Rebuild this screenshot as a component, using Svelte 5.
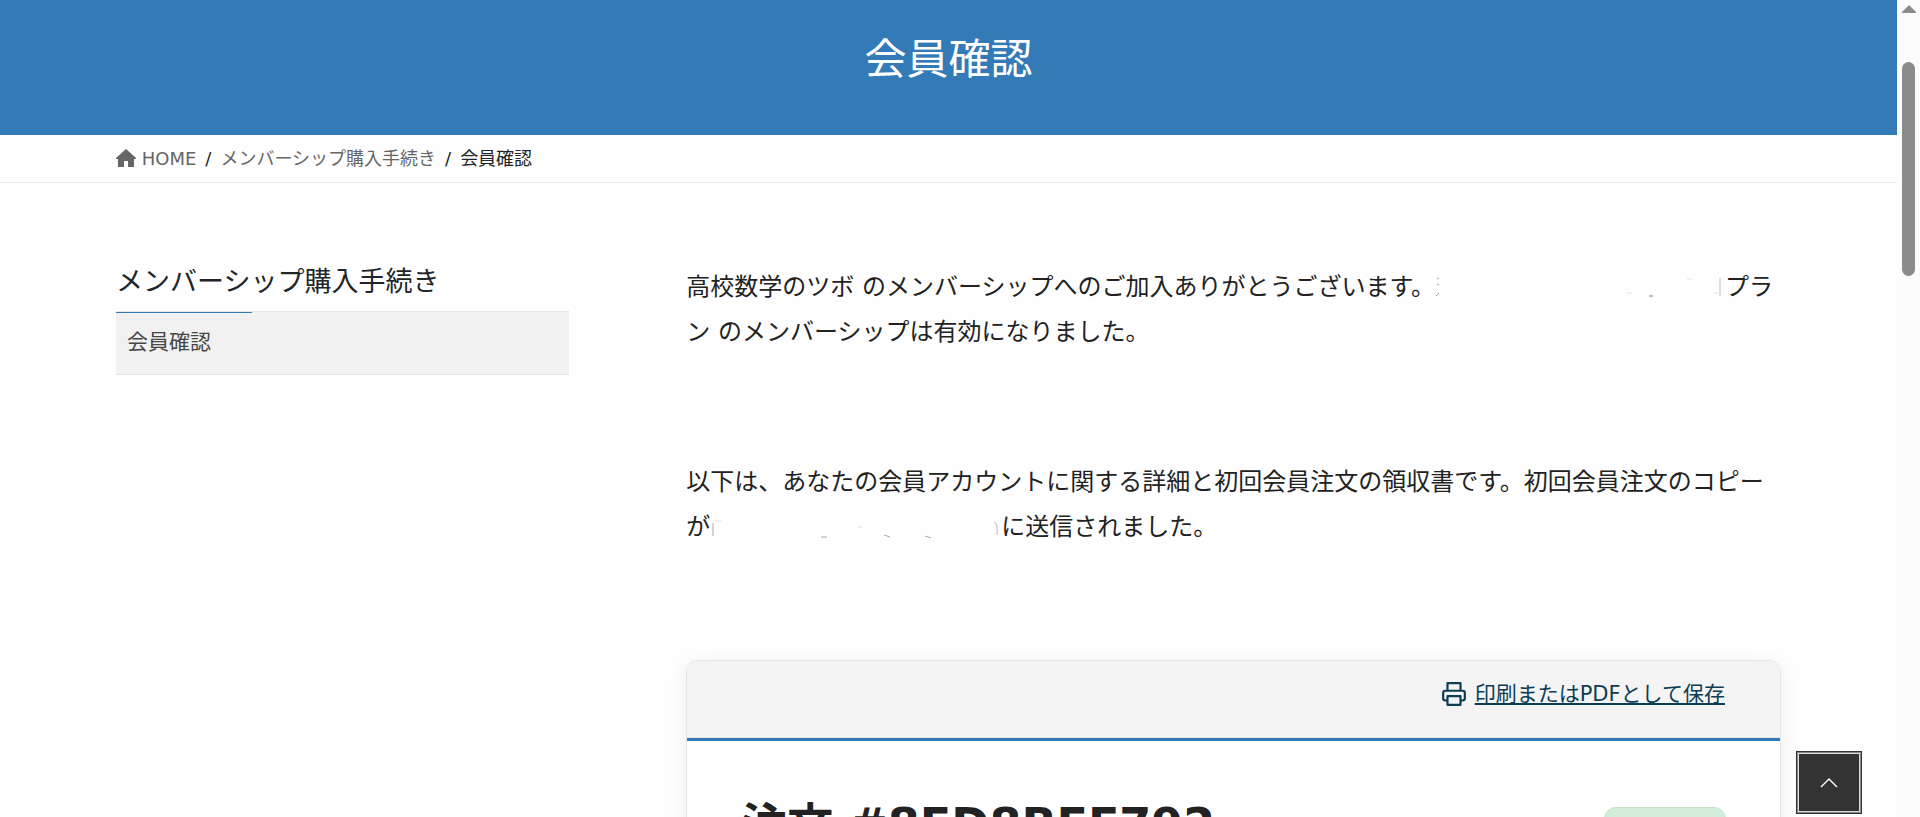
<script>
  const crumbs = ['メンバーシップ購入手続き'];
</script>

<div class="window">
  <div class="page">
    <header class="banner"><h1>会員確認</h1></header>

    <nav class="crumbs" aria-label="breadcrumb">
      <ol class="container">
        <li>
          <a href="#home">
            <svg class="home" viewBox="0 0 20 18" aria-hidden="true"><path d="M10 0 20 9v1h-2v8h-6v-6H8v6H2v-8H0V9z" /></svg>
            HOME
          </a>
        </li>
        {#each crumbs as crumb}
          <li><a href="#parent">{crumb}</a></li>
        {/each}
        <li aria-current="page">会員確認</li>
      </ol>
    </nav>

    <div class="container columns">
      <aside>
        <h2>メンバーシップ購入手続き</h2>
        <a class="side-link" href="#confirm">会員確認</a>
      </aside>

      <main>
        <p>
          高校数学のツボ のメンバーシップへのご加入ありがとうございます。<svg class="gap plan" viewBox="0 0 290 24" aria-hidden="true">
            <path d="M2 3l2 1M2 9l2 1M1 21l3-3" stroke="#999" />
            <path d="M192 18h5M252 4h5M278 18h5" stroke="#e4e2de" />
            <path d="M214 21h4" stroke="#bbb" stroke-width="2" />
            <path d="M285 3v18" stroke="#ddd" stroke-width="2" />
          </svg>プラン のメンバーシップは有効になりました。
        </p>
        <p class="second">
          以下は、あなたの会員アカウントに関する詳細と初回会員注文の領収書です。初回会員注文のコピーが<svg class="gap mail" viewBox="0 0 291 24" aria-hidden="true">
            <path d="M3 8v13" stroke="#aaa" />
            <path d="M5 6h6M148 12h4" stroke="#ddd" />
            <path d="M111 22h6M174 20l6 2M215 21l6 2" stroke="#aaa" />
            <path d="M284 7q4 1 3 13" stroke="#bbb" />
          </svg>に送信されました。
        </p>

        <section class="card">
          <div class="card-bar">
            <a href="#print">
              <svg class="printer" viewBox="0 0 24 24" aria-hidden="true">
                <path d="M6 9V2h12v7M6 18H4a2 2 0 0 1-2-2v-5a2 2 0 0 1 2-2h16a2 2 0 0 1 2 2v5a2 2 0 0 1-2 2h-2M6 14h12v8H6z" />
              </svg>
              <span>印刷またはPDFとして保存</span>
            </a>
          </div>
          <div class="card-body">
            <h2>注文 #8FD8BFF792</h2>
            <span class="badge"></span>
          </div>
        </section>
      </main>
    </div>
  </div>

  <div class="scrollbar" aria-hidden="true">
    <svg viewBox="0 0 16 9"><path d="M8 0 15 7v1H1V7z" /></svg>
    <div class="thumb"></div>
  </div>

  <button class="to-top" aria-label="ページの先頭へ">
    <svg viewBox="0 0 20 12" aria-hidden="true"><path d="M2 10 10 2l8 8" /></svg>
  </button>
</div>

<style>
  :global(body) {
    margin: 0;
    overflow: hidden;
    background: #fefefe;
  }
  .window {
    display: flex;
    height: 100vh;
    overflow: hidden;
    color: #212529;
    font-family: "DejaVu Sans", "Noto Sans CJK JP", sans-serif;
  }
  .page {
    flex: 1;
    min-width: 0;
  }
  h1, h2, p, ol {
    margin: 0;
    padding: 0;
    font-weight: 400;
  }
  .container {
    width: 88%;
    max-width: 1665px;
    margin: 0 auto;
  }
  .banner {
    padding: 28px 0 43px;
    background: #337ab7;
    color: #fff;
    text-align: center;
  }
  h1 {
    font-size: 42px;
    line-height: 64px;
  }
  .crumbs {
    padding: 8px 0;
    border-bottom: 1px solid #eee;
    font-size: 18px;
    line-height: 31px;
  }
  ol {
    display: flex;
    list-style: none;
  }
  li + li::before {
    content: "/";
    padding: 0 9px;
  }
  .crumbs a {
    color: #666;
    text-decoration: none;
  }
  .home {
    width: 20px;
    height: 18px;
    vertical-align: -2px;
    fill: #666;
  }
  .columns {
    display: flex;
    justify-content: space-between;
    align-items: flex-start;
    padding-top: 80px;
  }
  aside {
    width: 27.2%;
  }
  aside h2 {
    padding-bottom: 10px;
    font-size: 27px;
    line-height: 38px;
  }
  .side-link {
    display: block;
    padding: 13px 11px 15px;
    border: solid #e5e5e5;
    border-width: 1px 0;
    background: linear-gradient(#337ab7, #337ab7) 0 0 / 30% 1px no-repeat #f1f1f1;
    color: #464646;
    font-size: 21px;
    line-height: 34px;
    text-decoration: none;
  }
  main {
    width: 65.75%;
    color: #222;
  }
  p {
    padding-top: 2px;
    font-size: 24px;
    line-height: 45px;
    word-break: break-all;
  }
  .second {
    margin-top: 103px;
  }
  .gap {
    height: 24px;
    vertical-align: -4px;
    fill: none;
  }
  .plan {
    width: 290px;
  }
  .mail {
    width: 291px;
  }
  .card {
    margin-top: 110px;
    border: 1px solid #e5e5e5;
    border-radius: 12px;
    overflow: hidden;
    background: #fff;
    box-shadow: 0 4px 20px #00000012;
  }
  .card-bar {
    display: flex;
    justify-content: flex-end;
    padding: 14px 55px 24px;
    border-bottom: 1px solid #e5e5e5;
    background: #f4f4f4;
  }
  .card-bar a {
    display: flex;
    align-items: center;
    gap: 8px;
    color: #0c3d54;
    font-size: 21px;
    line-height: 38px;
    text-underline-offset: 2px;
    text-decoration-thickness: 2px;
  }
  .printer {
    width: 26px;
    height: 26px;
    fill: none;
    stroke: #0c3d54;
    stroke-width: 2;
    stroke-linecap: round;
    stroke-linejoin: round;
  }
  .card-body {
    display: flex;
    justify-content: space-between;
    align-items: flex-start;
    padding: 52px 54px;
    border-top: 3px solid #337ab7;
  }
  .card-body h2 {
    font-size: 46px;
    line-height: 64px;
    font-weight: 700;
    white-space: nowrap;
  }
  .badge {
    width: 120px;
    height: 40px;
    margin-top: 14px;
    border: 1px solid #c3e6cb;
    border-radius: 12px;
    background: #d4edda;
  }
  .scrollbar {
    display: flex;
    flex-direction: column;
    align-items: center;
    gap: 48px;
    width: 23px;
    padding-top: 5px;
    background: #fcfcfc;
  }
  .scrollbar svg {
    width: 16px;
    height: 9px;
    fill: #8b8b8b;
  }
  .thumb {
    width: 13px;
    height: 214px;
    border-radius: 7px;
    background: #8b8b8b;
  }
  .to-top {
    position: fixed;
    right: 58px;
    bottom: 3px;
    display: grid;
    place-items: center;
    width: 66px;
    height: 63px;
    padding: 0;
    border: 1px solid #333;
    border-radius: 0;
    background: #333;
    box-shadow: inset 0 0 0 1px #888, inset 0 0 0 2px #ddd;
  }
  .to-top svg {
    width: 20px;
    height: 12px;
    fill: none;
    stroke: #fff;
    stroke-width: 1.4;
  }
</style>
